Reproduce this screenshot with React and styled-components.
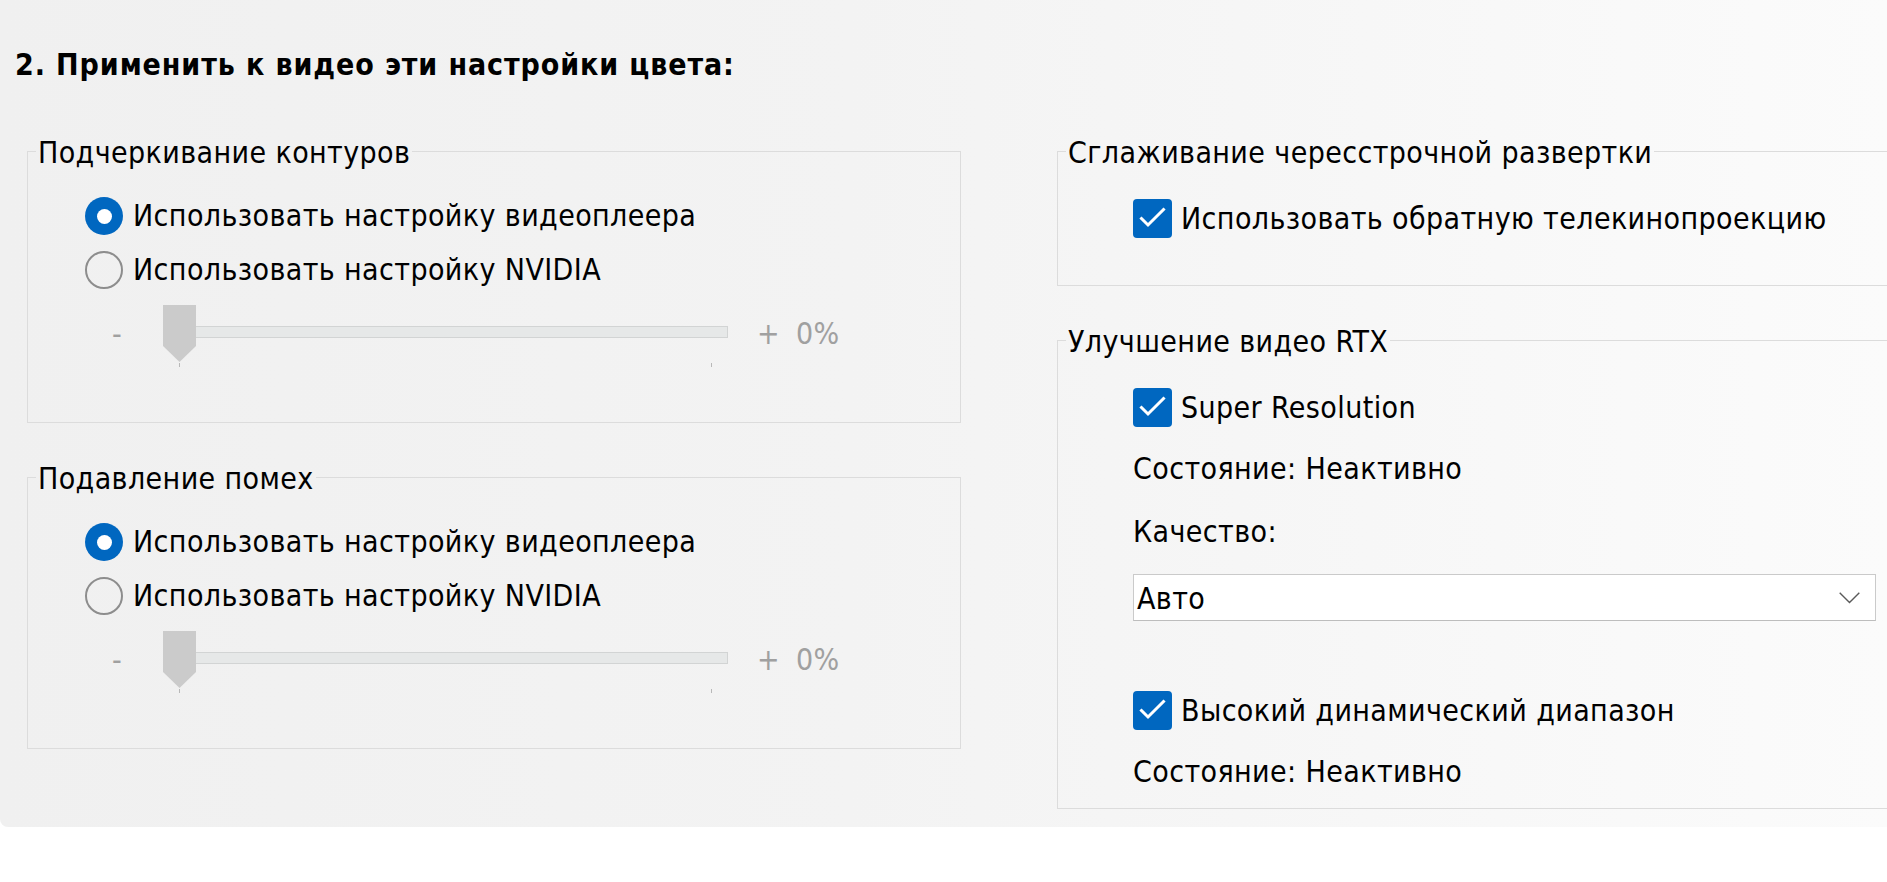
import React from 'react';
import styled, { createGlobalStyle } from 'styled-components';

const Global = createGlobalStyle`
  html, body { margin: 0; padding: 0; background: #ffffff; }
  body { overflow: hidden; }
`;

const Page = styled.div`
  width: 1887px;
  height: 882px;
  background: #ffffff;
  overflow: hidden;
`;

const Panel = styled.div`
  background: linear-gradient(to right, #f0f0f0 0%, #f3f3f3 45%, #fbfbfb 100%);
  border-bottom-left-radius: 8px;
  padding: 47px 0 18px 0;
  font-family: "DejaVu Sans Condensed", "DejaVu Sans", sans-serif;
  font-stretch: condensed;
  font-size: 30px;
  line-height: 38px;
  letter-spacing: 0.4px;
  color: #000;
`;

const Title = styled.h2`
  margin: 0 0 48px 15px;
  font-size: 30px;
  line-height: 36px;
  font-weight: bold;
  letter-spacing: 0.9px;
`;

const Columns = styled.div`
  display: grid;
  grid-template-columns: 934px 900px;
  column-gap: 96px;
  padding-left: 27px;
  align-items: start;
`;

const Column = styled.div`
  display: flex;
  flex-direction: column;
  gap: ${p => p.$gap}px;
`;

const Group = styled.fieldset`
  margin: 0;
  min-width: 0;
  border: 1px solid #dcdcdc;
  padding: 0;
`;

const Legend = styled.legend`
  margin-left: 8px;
  padding: 4px 2px 0;
  font-size: 30px;
  line-height: 36px;
`;

const Body = styled.div`
  display: flex;
  flex-direction: column;
  align-items: flex-start;
  gap: ${p => p.$gap || 0}px;
  padding: ${p => p.$top}px 0 ${p => p.$bottom}px ${p => p.$left}px;
`;

const OptionRow = styled.label`
  display: flex;
  align-items: center;
  gap: ${p => p.$gap}px;
  height: ${p => p.$h}px;
  line-height: ${p => p.$h}px;
  white-space: nowrap;
`;

const RadioDot = styled.span`
  box-sizing: border-box;
  width: 38px;
  height: 38px;
  border-radius: 50%;
  flex: none;
  position: relative;
  background: ${p => (p.$on ? '#0067c0' : 'transparent')};
  border: ${p => (p.$on ? 'none' : '2px solid #8d8d8d')};
  &::after {
    content: '';
    display: ${p => (p.$on ? 'block' : 'none')};
    position: absolute;
    left: 11.5px;
    top: 11.5px;
    width: 15px;
    height: 15px;
    border-radius: 50%;
    background: #fff;
  }
`;

const CheckBox = styled.span`
  width: 39px;
  height: 39px;
  border-radius: 4px;
  background: #0067c0;
  flex: none;
  display: flex;
  align-items: center;
  justify-content: center;
`;

const SliderRow = styled.div`
  display: flex;
  align-items: flex-start;
  margin-left: 27px;
  height: 62px;
  color: #a0a0a0;
`;

const SideLabel = styled.span`
  margin-top: 10px;
  width: ${p => p.$w || 'auto'};
  margin-left: ${p => p.$ml || 0}px;
  white-space: pre;
  flex: none;
`;

const SliderBox = styled.div`
  position: relative;
  width: 565px;
  height: 62px;
  flex: none;
`;

const Track = styled.div`
  position: absolute;
  left: 12px;
  right: 0;
  top: 21px;
  height: 10px;
  background: #e6e8e8;
  border: 1px solid #d2d4d4;
  border-left: none;
`;

const Thumb = styled.div`
  position: absolute;
  left: 0;
  top: 0;
  width: 33px;
  height: 57px;
  background: #cbcbcb;
  clip-path: polygon(0 0, 100% 0, 100% 72%, 50% 100%, 0 72%);
`;

const Tick = styled.div`
  position: absolute;
  left: ${p => p.$x}px;
  top: 58px;
  width: 1px;
  height: 4px;
  background: #b8b8b8;
`;

const Text = styled.div`
  height: 38px;
  line-height: 38px;
  white-space: nowrap;
  margin-top: ${p => p.$mt || 0}px;
`;

const Select = styled.div`
  box-sizing: border-box;
  width: 743px;
  height: 47px;
  background: #ffffff;
  border: 1px solid #cacaca;
  border-bottom-color: #bdbdbd;
  display: flex;
  align-items: center;
  justify-content: space-between;
  padding: 0 15px 0 3px;
  margin-bottom: 47px;
`;

const SelectText = styled.span`
  line-height: 38px;
  padding-top: 2px;
`;

function Check() {
  return (
    <svg width="39" height="39" viewBox="0 0 39 39">
      <polyline points="8.5,19.5 15,26 30.5,10.5" fill="none" stroke="#fff" strokeWidth="3" strokeLinecap="square" />
    </svg>
  );
}

function Chevron() {
  return (
    <svg width="21" height="12" viewBox="0 0 21 12">
      <polyline points="0.7,0.7 10.5,10.5 20.3,0.7" fill="none" stroke="#5a5a5a" strokeWidth="1.4" />
    </svg>
  );
}

function Radio({ on, children }) {
  return (
    <OptionRow $gap={10} $h={38}>
      <RadioDot $on={on} />
      <span>{children}</span>
    </OptionRow>
  );
}

function Checked({ children }) {
  return (
    <OptionRow $gap={9} $h={39}>
      <CheckBox><Check /></CheckBox>
      <span>{children}</span>
    </OptionRow>
  );
}

function Slider() {
  return (
    <SliderRow>
      <SideLabel $w="51px">-</SideLabel>
      <SliderBox>
        <Track />
        <Thumb />
        <Tick $x={16} />
        <Tick $x={548} />
      </SliderBox>
      <SideLabel $ml={29}>+</SideLabel>
      <SideLabel $ml={16}>0%</SideLabel>
    </SliderRow>
  );
}

function ColorGroup({ title }) {
  return (
    <Group>
      <Legend>{title}</Legend>
      <Body $gap={16} $top={26} $bottom={55} $left={57}>
        <Radio on>Использовать настройку видеоплеера</Radio>
        <Radio>Использовать настройку NVIDIA</Radio>
        <Slider />
      </Body>
    </Group>
  );
}

export default function App() {
  return (
    <Page>
      <Global />
      <Panel>
        <Title>2. Применить к видео эти настройки цвета:</Title>
        <Columns>
          <Column $gap={34}>
            <ColorGroup title="Подчеркивание контуров" />
            <ColorGroup title="Подавление помех" />
          </Column>
          <Column $gap={34}>
            <Group>
              <Legend>Сглаживание чересстрочной развертки</Legend>
              <Body $top={28} $bottom={47} $left={75}>
                <Checked>Использовать обратную телекинопроекцию</Checked>
              </Body>
            </Group>
            <Group>
              <Legend>Улучшение видео RTX</Legend>
              <Body $gap={23} $top={28} $bottom={17} $left={75}>
                <Checked>Super Resolution</Checked>
                <Text>Состояние: Неактивно</Text>
                <Text $mt={2}>Качество:</Text>
                <Select>
                  <SelectText>Авто</SelectText>
                  <Chevron />
                </Select>
                <Checked>Высокий динамический диапазон</Checked>
                <Text>Состояние: Неактивно</Text>
              </Body>
            </Group>
          </Column>
        </Columns>
      </Panel>
    </Page>
  );
}
